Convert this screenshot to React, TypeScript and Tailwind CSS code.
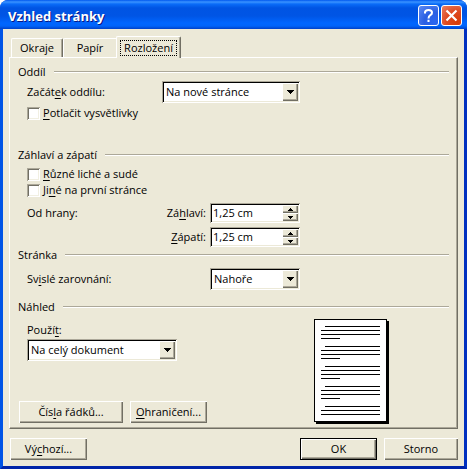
import React, { useState } from 'react';

const sunken =
  'shadow-[inset_1px_1px_#aca899,inset_-1px_-1px_#ffffff,inset_2px_2px_#000000,inset_-2px_-2px_#ece9d8]';
const raised =
  'shadow-[inset_1px_1px_#ffffff,inset_-1px_-1px_#716f64,inset_-2px_-2px_#aca899]';

const U: React.FC<{ children: React.ReactNode }> = ({ children }) => (
  <span className="underline decoration-1 underline-offset-2">{children}</span>
);

const GroupHeading: React.FC<{ title: string; className: string }> = ({ title, className }) => (
  <div className={`flex h-4 items-center gap-2 ${className}`}>
    <h2>{title}</h2>
    <div className="h-0.5 grow border-t border-b border-t-[#aca899] border-b-white" />
  </div>
);

interface DropDownProps {
  id: string;
  options: string[];
  className: string;
}

const DropDown: React.FC<DropDownProps> = ({ id, options, className }) => (
  <div className={`relative h-[22px] bg-white ${sunken} ${className}`}>
    <select id={id} className="h-full w-full appearance-none bg-transparent pr-5 pl-1 outline-none">
      {options.map((option) => (
        <option key={option}>{option}</option>
      ))}
    </select>
    <span
      className={`pointer-events-none absolute inset-y-0.5 right-0.5 flex w-4 items-center justify-center bg-[#ece9d8] ${raised}`}
    >
      <svg width="7" height="4" viewBox="0 0 7 4" shapeRendering="crispEdges">
        <path d="M0 0h7v1h-1v1h-1v1h-1v1h-1v-1h-1v-1h-1v-1h-1z" />
      </svg>
    </span>
  </div>
);

const CheckBox: React.FC<{ id: string; children: React.ReactNode }> = ({ id, children }) => (
  <div className="flex h-4 items-center gap-[3px] pl-[9px]">
    <input
      id={id}
      type="checkbox"
      className="size-[13px] appearance-none bg-white shadow-[inset_1px_1px_#aca899,inset_-1px_-1px_#ffffff,inset_2px_2px_#716f64,inset_-2px_-2px_#f1efe2] checked:bg-black"
    />
    <label htmlFor={id}>{children}</label>
  </div>
);

// Distance in centimetres with up / down arrows on the right
const SpinBox: React.FC<{ id: string }> = ({ id }) => {
  const [value, setValue] = useState('1,25 cm');

  const step = (delta: number) => {
    const next = Math.max(0, (parseFloat(value.replace(',', '.')) || 0) + delta);
    setValue(`${next.toFixed(2).replace('.', ',')} cm`);
  };

  return (
    <div className={`flex h-5 w-[90px] bg-white p-0.5 ${sunken}`}>
      <input
        id={id}
        type="text"
        value={value}
        onChange={(e) => setValue(e.target.value)}
        className="w-0 grow bg-transparent pl-px outline-none"
      />
      <div className="flex w-4 flex-col">
        <button
          type="button"
          aria-label="Zvětšit"
          onClick={() => step(0.1)}
          className={`flex h-2 items-center justify-center bg-[#ece9d8] ${raised}`}
        >
          <svg width="5" height="3" viewBox="0 0 5 3" shapeRendering="crispEdges">
            <path d="M2 0h1v1h1v1h1v1h-5v-1h1v-1h1z" />
          </svg>
        </button>
        <button
          type="button"
          aria-label="Zmenšit"
          onClick={() => step(-0.1)}
          className={`flex h-2 items-center justify-center bg-[#ece9d8] ${raised}`}
        >
          <svg width="5" height="3" viewBox="0 0 5 3" shapeRendering="crispEdges">
            <path d="M0 0h5v1h-1v1h-1v1h-1v-1h-1v-1h-1z" />
          </svg>
        </button>
      </div>
    </div>
  );
};

const PushButton: React.FC<{ className: string; children: React.ReactNode }> = ({ className, children }) => (
  <button type="button" className={`h-[22px] bg-[#ece9d8] text-center ${className}`}>
    {children}
  </button>
);

const PagePreview: React.FC = () => (
  <svg width="75" height="105" viewBox="0 0 75 105" shapeRendering="crispEdges">
    <rect x="2" y="2" width="73" height="103" />
    <rect x="0" y="0" width="73" height="103" />
    <rect x="1" y="1" width="71" height="101" fill="#fff" />
    {[7, 27, 47, 67, 87].map((y) => (
      <g key={y}>
        <rect x="11" y={y} width="55" height="1" />
        <rect x="7" y={y + 4} width="59" height="1" />
        <rect x="7" y={y + 8} width="59" height="1" />
        {y < 87 && <rect x="7" y={y + 12} width="19" height="1" />}
      </g>
    ))}
  </svg>
);

const TitleBar: React.FC = () => (
  <div className="flex h-[29px] items-center justify-between bg-[linear-gradient(#0058ee_0px,#3a93ff_2px,#0a6cf8_4px,#0054e3_8px,#0055e5_16px,#0066ff_23px,#0064fa_26px,#0041c8_29px)] pt-0.5 pr-[5px] pl-2">
    <h1 className="font-['Open_Sans',sans-serif] text-[13px] leading-4 font-bold text-white [text-shadow:1px_1px_#0a1883]">
      Vzhled stránky
    </h1>
    <div className="flex gap-0.5">
      <button
        type="button"
        aria-label="Nápověda"
        className="size-[21px] rounded-[3px] border border-white bg-[radial-gradient(circle_at_80%_85%,#2a66f0,#2b5fe3_45%,#5e8bf3)]"
      >
        <svg width="19" height="19" viewBox="0 0 19 19" fill="none" stroke="#fff" strokeWidth="2">
          <path d="M6 7.5V6.5Q6 4 9.5 4T13 6.7Q13 8.2 11.3 9.2T9.5 12.5" />
          <path d="M9.5 13.8V16" />
        </svg>
      </button>
      <button
        type="button"
        aria-label="Zavřít"
        className="size-[21px] rounded-[3px] border border-white bg-[radial-gradient(circle_at_80%_85%,#d83c08,#de4a22_50%,#ea8064)]"
      >
        <svg width="19" height="19" viewBox="0 0 19 19" fill="none" stroke="#fff" strokeWidth="2.2">
          <path d="M4.5 4.5L14.5 14.5M14.5 4.5L4.5 14.5" />
        </svg>
      </button>
    </div>
  </div>
);

const App: React.FC = () => {
  return (
    <main className="bg-white font-['Open_Sans',sans-serif] text-[11px] leading-4 text-black">
      <div className="overflow-hidden rounded-t-lg bg-[#0046d8]">
        <TitleBar />
        <div className="border-x-3 border-b-3 border-t-0 border-r-[#0030c0] border-b-[#0024a8] border-l-[#0054e6] bg-[#ece9d8] px-1.5 pt-[7px] pb-1.5">
          <div role="tablist" className="flex items-end pl-0.5">
            <button
              type="button"
              role="tab"
              aria-selected="false"
              className="h-[19px] w-[52px] rounded-t-xs border-t border-r border-l border-t-white border-r-[#716f64] border-l-white shadow-[inset_-1px_0_#aca899]"
            >
              Okraje
            </button>
            <button
              type="button"
              role="tab"
              aria-selected="false"
              className="h-[19px] w-[53px] rounded-tl-xs border-t border-l border-white"
            >
              Papír
            </button>
            <button
              type="button"
              role="tab"
              aria-selected="true"
              className="-mb-px flex h-[22px] w-[65px] items-start justify-center rounded-t-xs border-t border-r border-l border-t-white border-r-[#716f64] border-l-white bg-[#ece9d8] pt-[3px] shadow-[inset_-1px_0_#aca899]"
            >
              <span className="border border-dotted border-black px-[3px] leading-[14px]">Rozložení</span>
            </button>
          </div>

          <form
            onSubmit={(e) => e.preventDefault()}
            className="border border-t-white border-r-[#716f64] border-b-[#716f64] border-l-white px-2 pt-1.5 pb-1 shadow-[inset_-1px_-1px_#aca899]"
          >
            <GroupHeading title="Oddíl" className="" />
            <div className="mt-px flex items-center pl-[9px]">
              <label htmlFor="section" className="w-[135px]">
                Začát<U>e</U>k oddílu:
              </label>
              <DropDown id="section" options={['Na nové stránce', 'Průběžně']} className="w-[138px]" />
            </div>
            <div className="mt-0.5">
              <CheckBox id="endnotes">
                <U>P</U>otlačit vysvětlivky
              </CheckBox>
            </div>

            <GroupHeading title="Záhlaví a zápatí" className="mt-[26px]" />
            <div className="mt-[3px]">
              <CheckBox id="oddeven">
                <U>R</U>ůzné liché a sudé
              </CheckBox>
              <CheckBox id="firstpage">
                Ji<U>n</U>é na první stránce
              </CheckBox>
            </div>
            <div className="mt-[5px] flex items-center pl-[9px]">
              <span className="w-[90px]">Od hrany:</span>
              <label htmlFor="header" className="w-[93px] pr-1 text-right">
                Zá<U>h</U>laví:
              </label>
              <SpinBox id="header" />
            </div>
            <div className="mt-1 flex items-center pl-[99px]">
              <label htmlFor="footer" className="w-[93px] pr-1 text-right">
                <U>Z</U>ápatí:
              </label>
              <SpinBox id="footer" />
            </div>

            <GroupHeading title="Stránka" className="" />
            <div className="mt-[5px] flex items-center pl-[9px]">
              <label htmlFor="valign" className="w-[183px]">
                Sv<U>i</U>slé zarovnání:
              </label>
              <DropDown id="valign" options={['Nahoře', 'Na střed', 'Dole']} className="w-[90px]" />
            </div>

            <GroupHeading title="Náhled" className="mt-[9px]" />
            <div className="flex justify-between pt-1 pr-[60px]">
              <div className="flex flex-col justify-between pb-px">
                <div className="pt-[3px] pl-[9px]">
                  <label htmlFor="apply" className="block">
                    Použí<U>t</U>:
                  </label>
                  <DropDown
                    id="apply"
                    options={['Na celý dokument', 'Odsud dále']}
                    className="mt-px w-[150px]"
                  />
                </div>
                <div className="flex gap-[7px] pl-px">
                  <PushButton className={`w-[104px] ${raised}`}>
                    Čís<U>l</U>a řádků...
                  </PushButton>
                  <PushButton className={`w-[77px] ${raised}`}>
                    <U>O</U>hraničení...
                  </PushButton>
                </div>
              </div>
              <PagePreview />
            </div>
          </form>

          <div className="mt-[9px] flex gap-[7px] pl-px">
            <PushButton className={`mr-auto w-[77px] ${raised}`}>
              Vý<U>c</U>hozí...
            </PushButton>
            <PushButton className={`w-[77px] border border-black ${raised}`}>OK</PushButton>
            <PushButton className={`w-[74px] ${raised}`}>Storno</PushButton>
          </div>
        </div>
      </div>
    </main>
  );
};

export default App;
